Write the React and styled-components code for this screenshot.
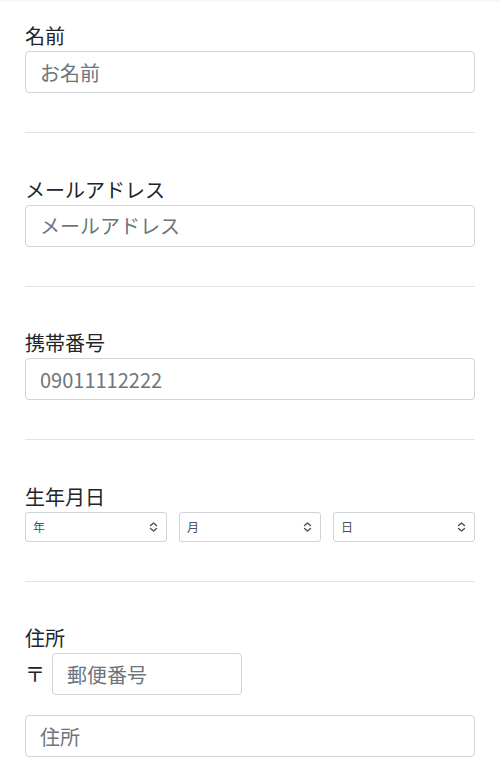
import styled, { createGlobalStyle } from 'styled-components';

const GlobalStyle = createGlobalStyle`
	html, body {
		margin: 0;
		padding: 0;
		background: #fff;
	}

	body {
		font-family: 'Noto Sans CJK JP', 'Noto Sans', sans-serif;
		color: #212529;
	}

	* {
		box-sizing: border-box;
	}
`;

const ChevronUpDown = () => (
	<svg width='9' height='11' viewBox='0 0 9 11' fill='none'>
		<path
			d='M1.5 4L4.5 1.5L7.5 4M1.5 7L4.5 9.5L7.5 7'
			stroke='#495057'
			strokeWidth='1.4'
			strokeLinecap='round'
			strokeLinejoin='round'
		/>
	</svg>
);

const Field = ({ label, children, last }) => (
	<Section $last={last}>
		<Label>{label}</Label>
		{children}
	</Section>
);

const DateSelect = ({ placeholder }) => (
	<SelectWrap>
		<Select defaultValue=''>
			<option value=''>{placeholder}</option>
		</Select>
		<SelectIcon>
			<ChevronUpDown />
		</SelectIcon>
	</SelectWrap>
);

const App = () => (
	<>
		<GlobalStyle />
		<Page>
			<Field label='名前'>
				<Input placeholder='お名前' />
			</Field>
			<Field label='メールアドレス'>
				<Input placeholder='メールアドレス' />
			</Field>
			<Field label='携帯番号'>
				<Input placeholder='09011112222' />
			</Field>
			<Field label='生年月日'>
				<SelectRow>
					<DateSelect placeholder='年' />
					<DateSelect placeholder='月' />
					<DateSelect placeholder='日' />
				</SelectRow>
			</Field>
			<Field label='住所' last>
				<PostalRow>
					<PostalMark>〒</PostalMark>
					<Input placeholder='郵便番号' $width='190px' />
				</PostalRow>
				<Input placeholder='住所' />
			</Field>
		</Page>
	</>
);

const Page = styled.main`
	min-height: 771px;
	padding: 0 25px;
	box-shadow: inset 0 3px 3px -2px rgba(0, 0, 0, 0.06);
`;

const Section = styled.div`
	display: flex;
	flex-direction: column;
	padding: 21px 0 39px;
	border-bottom: ${({ $last }) => ($last ? 'none' : '1px solid #e1e3e6')};

	& + & {
		padding-top: 41.5px;
	}
`;

const Label = styled.label`
	display: block;
	font-size: 20px;
	line-height: 30px;
	color: #212529;
`;

const Input = styled.input`
	display: block;
	width: ${({ $width }) => $width || '100%'};
	height: 42px;
	padding: 5px 14px;
	font-family: inherit;
	font-size: 20px;
	line-height: 30px;
	color: #495057;
	background: #fff;
	border: 1px solid #ced4da;
	border-radius: 4px;
	outline: none;

	&::placeholder {
		color: #6c757d;
	}

	& + & {
		margin-top: 20px;
	}
`;

const SelectRow = styled.div`
	display: grid;
	grid-template-columns: repeat(3, 1fr);
	gap: 12px;
`;

const SelectWrap = styled.div`
	position: relative;
`;

const Select = styled.select`
	display: block;
	width: 100%;
	height: 30px;
	padding: 0 24px 0 7px;
	font-family: inherit;
	font-size: 12px;
	color: #495057;
	background: #fff;
	border: 1px solid #ced4da;
	border-radius: 3px;
	appearance: none;
	outline: none;
`;

const SelectIcon = styled.span`
	position: absolute;
	top: 50%;
	right: 9px;
	display: flex;
	transform: translateY(-50%);
	pointer-events: none;
`;

const PostalRow = styled.div`
	display: flex;
	align-items: center;
	gap: 7px;
	margin-bottom: 20px;
`;

const PostalMark = styled.span`
	width: 20px;
	font-size: 20px;
	line-height: 30px;
	color: #212529;
`;

export default App;
